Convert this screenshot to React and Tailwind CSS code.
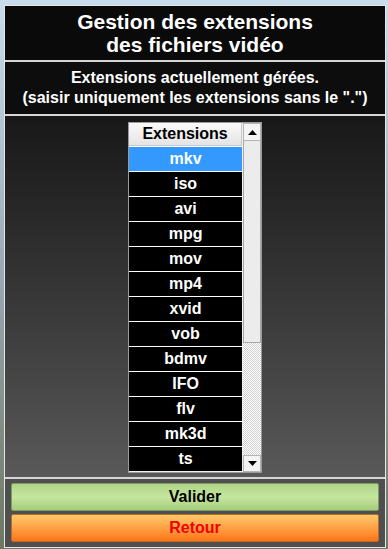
import React from "react";

const extensions = ["mkv", "iso", "avi", "mpg", "mov", "mp4", "xvid", "vob", "bdmv", "IFO", "flv", "mk3d", "ts"];

const ExtensionList = () => {
  return (
    <div className="flex w-[134px] h-[351px] border border-[#9a9a9a] bg-[#f0f0f0]">
      <div className="flex flex-col w-[114px]">
        <div className="h-[23px] flex items-center justify-center bg-gradient-to-b from-[#fafafa] to-[#e4e4e4] border-r border-b border-[#c8c8c8] text-black text-[16px] font-bold">
          Extensions
        </div>
        {extensions.map((ext, i) => (
          <div
            key={ext}
            className={
              i === 0
                ? "h-[25px] border-t border-white flex items-center justify-center bg-[#3399ff] text-white text-[16px] font-bold"
                : "h-[25px] border-t border-white flex items-center justify-center bg-black text-white text-[16px] font-bold"
            }
          >
            {ext}
          </div>
        ))}
      </div>
      {/* scrollbar */}
      <div className="flex flex-col w-[18px] ml-[1px]">
        <div className="h-[18px] flex items-center justify-center bg-[#f4f4f4] border border-[#b4b4b4]">
          <svg width="9" height="5" viewBox="0 0 9 5">
            <path d="M4.5 0 L9 5 L0 5 Z" fill="#000" />
          </svg>
        </div>
        <div className="h-[202px] bg-[#ececec] border border-[#a8a8a8] border-t-0"></div>
        <div className="flex-1 bg-[repeating-conic-gradient(#ffffff_0%_25%,#d0d0d0_0%_50%)] bg-[length:2px_2px]"></div>
        <div className="h-[17px] flex items-center justify-center bg-[#f4f4f4] border border-[#b4b4b4]">
          <svg width="9" height="5" viewBox="0 0 9 5">
            <path d="M0 0 L9 0 L4.5 5 Z" fill="#000" />
          </svg>
        </div>
      </div>
    </div>
  );
};

const App = () => {
  return (
    <div className="w-[388px] h-[549px] overflow-hidden pt-[5px] pl-[4px] bg-gradient-to-b from-[#c9dced] via-[#9aa8b4] to-[#6d7860] font-['Liberation_Sans',Arial,sans-serif]">
      <div className="w-[382px] h-[543px] flex flex-col gap-[2px] border border-[#e6e6e6] bg-[#d6d6d6]">
        <div className="h-[54px] shrink-0 flex flex-col items-center justify-center bg-[#0a0a0a] text-white text-[21px] font-bold leading-[23px]">
          <span>Gestion des extensions</span>
          <span>des fichiers vidéo</span>
        </div>
        <div className="h-[52px] shrink-0 flex flex-col items-center justify-center bg-[#0d0d0d] text-white text-[16px] font-bold leading-[20px]">
          <span>Extensions actuellement gérées.</span>
          <span>(saisir uniquement les extensions sans le ".")</span>
        </div>
        <div className="h-[361px] shrink-0 flex justify-center pt-[6px] bg-gradient-to-b from-[#181818] to-[#595959]">
          <ExtensionList />
        </div>
        <div className="flex-1 flex flex-col gap-[3px] px-[6px] pt-[4px] bg-[#4f4f4f]">
          <button className="h-[28px] w-full rounded-[2px] border border-[#7f9c65] bg-gradient-to-b from-[#aed485] via-[#c6e69f] to-[#a5cc7b] text-black text-[16px] font-bold">
            Valider
          </button>
          <button className="h-[28px] w-full rounded-[2px] border border-[#b86a2a] bg-gradient-to-b from-[#ffc868] to-[#ff7410] text-[#f00000] text-[16px] font-bold">
            Retour
          </button>
        </div>
      </div>
    </div>
  );
};

export default App;
